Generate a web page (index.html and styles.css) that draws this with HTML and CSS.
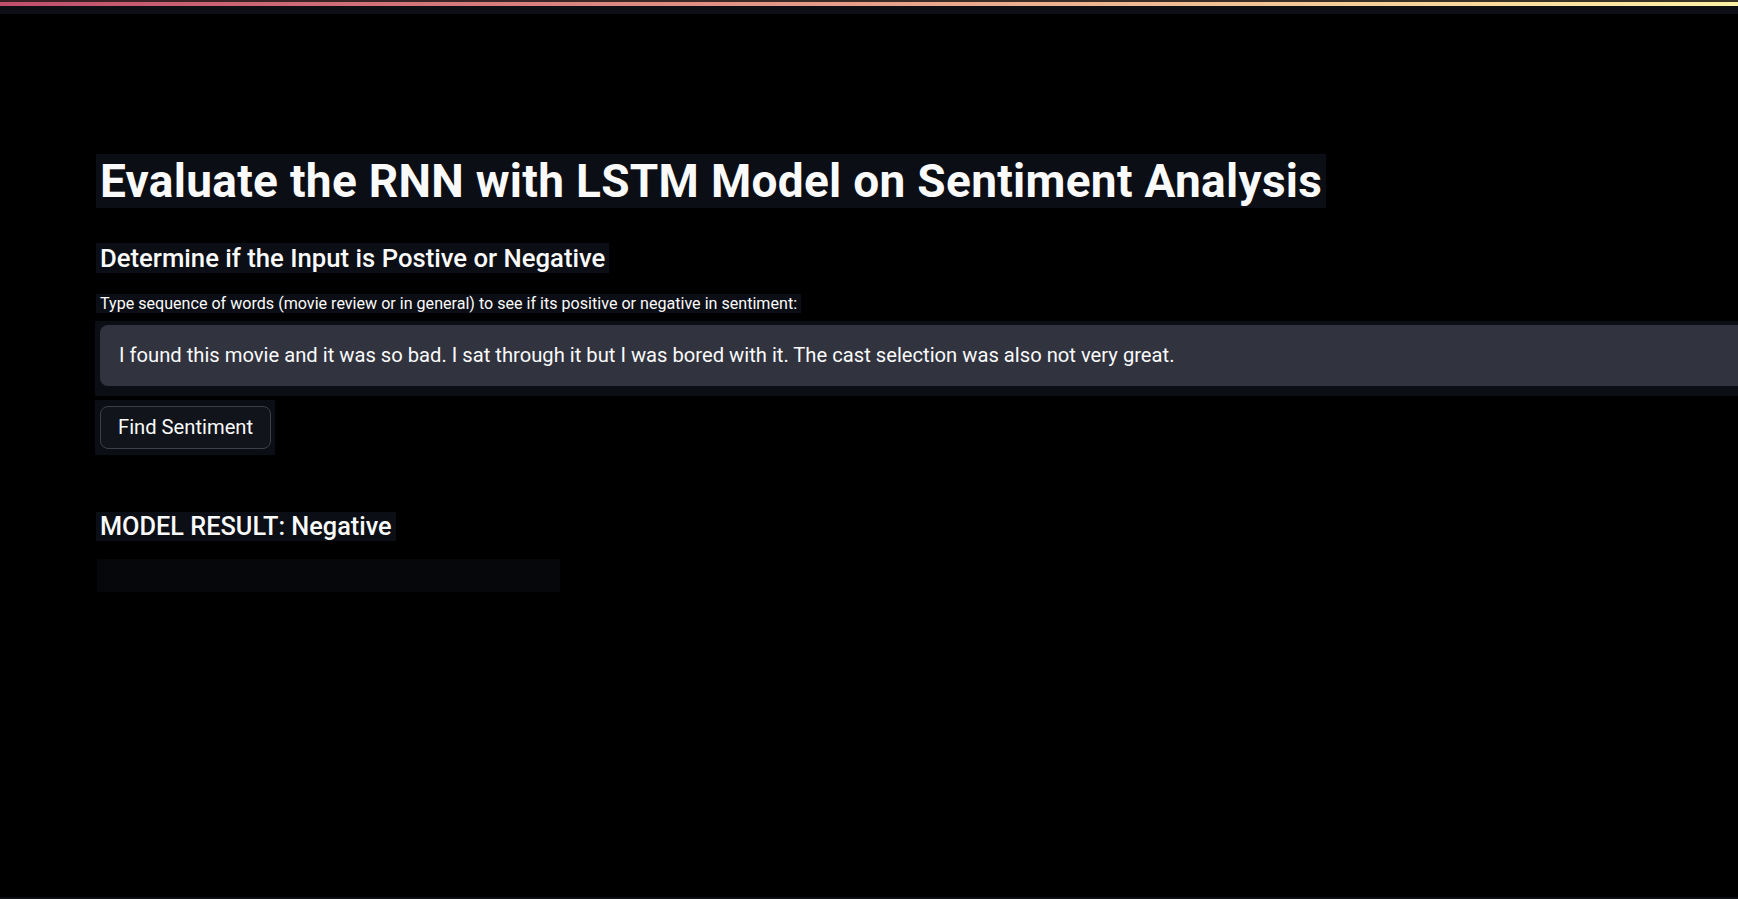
FILE: index.html
```html
<!DOCTYPE html>
<html lang="en">
<head>
<meta charset="utf-8">
<title>Sentiment Analysis</title>
<link rel="stylesheet" href="styles.css">
</head>
<body>
<div class="page">
  <header class="top">
    <div class="deco-dim"></div>
    <div class="deco"></div>
    <div class="top-band"></div>
  </header>
  <main class="main">
    <h1 class="title"><span class="patch">Evaluate the RNN with LSTM Model on Sentiment Analysis</span></h1>
    <h3 class="subtitle"><span class="patch">Determine if the Input is Postive or Negative</span></h3>
    <label class="label" for="review"><span class="patch">Type sequence of words (movie review or in general) to see if its positive or negative in sentiment:</span></label>
    <div class="input-wrap">
      <div class="input-box" id="review">I found this movie and it was so bad. I sat through it but I was bored with it. The cast selection was also not very great.</div>
    </div>
    <div class="button-wrap">
      <button class="btn" type="button">Find Sentiment</button>
    </div>
    <h3 class="result"><span class="patch">MODEL RESULT: Negative</span></h3>
    <div class="smudge"></div>
  </main>
  <div class="spacer"></div>
  <footer class="bottom"></footer>
</div>
</body>
</html>
```

FILE: styles.css
```css
html, body {
  margin: 0;
  padding: 0;
  background: #000;
  overflow: hidden;
}

body {
  font-family: Roboto, "Noto Sans", "Liberation Sans", sans-serif;
  color: #fafafa;
}

.page {
  display: flex;
  flex-direction: column;
  min-height: 100vh;
}

.top {
  display: flex;
  flex-direction: column;
}

.deco-dim {
  height: 2px;
  background: linear-gradient(90deg, #3a2025, #3a3528);
}

.deco {
  height: 4px;
  background: linear-gradient(90deg, #c04f6c, #e8a08a 50%, #fff2a4);
}

.top-band {
  height: 8px;
  background: #0d0f15;
}

.main {
  padding: 0 0 0 100px;
  display: flex;
  flex-direction: column;
  align-items: flex-start;
}

.patch {
  background: #0c0e15;
  padding: 0 4px;
  margin: 0 -4px;
}

.title {
  margin: 137px 0 0;
  font-size: 46px;
  font-weight: 700;
  line-height: 60px;
  letter-spacing: 0.3px;
}

.subtitle {
  margin: 29px 0 0;
  font-size: 25.7px;
  font-weight: 500;
  line-height: 36px;
}

.label {
  margin: 16px 0 0;
  font-size: 16.1px;
  line-height: 24px;
}

.input-wrap {
  margin: 5px 0 0 -5px;
  padding: 4px 0 10px 5px;
  background: #0c0e15;
  align-self: stretch;
}

.input-box {
  height: 61px;
  line-height: 61px;
  background: #31333f;
  border-radius: 8px 0 0 8px;
  padding: 0 19px;
  font-size: 20.2px;
  color: #fafafa;
  white-space: nowrap;
}

.button-wrap {
  margin: 4px 0 0 -5px;
  padding: 6px 4px 6px 5px;
  background: #0c0e15;
}

.btn {
  display: block;
  height: 43px;
  padding: 0 17px;
  background: #11141b;
  border: 1px solid #3d4049;
  border-radius: 8px;
  color: #fafafa;
  font-family: inherit;
  font-size: 20.2px;
  line-height: 41px;
}

.result {
  margin: 54px 0 0;
  font-size: 25.3px;
  font-weight: 500;
  line-height: 36px;
}

.smudge {
  margin: 14px 0 0 -3px;
  width: 463px;
  height: 33px;
  background: #06070b;
}

.spacer {
  flex: 1;
}

.bottom {
  height: 2px;
  background: #0d0f15;
}
```
